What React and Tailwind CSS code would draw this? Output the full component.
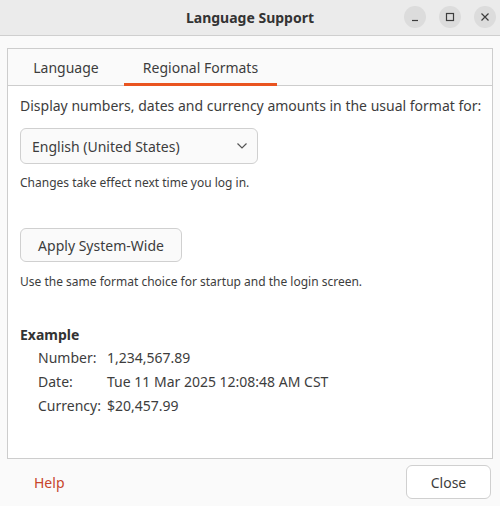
import React, { useState } from 'react';

const font = { fontFamily: '"Noto Sans", "Liberation Sans", sans-serif' };

const TitleButton = ({ children }) => (
  <button className="w-[22px] h-[22px] rounded-full bg-[#dcdcdc] flex items-center justify-center text-[#3d3d3d]">
    {children}
  </button>
);

const App = () => {
  const [tab, setTab] = useState('regional');

  return (
    <div className="w-[500px] h-[506px] bg-[#fafafa] flex flex-col text-[#3d3d3d] whitespace-nowrap" style={font}>
      {/* title bar */}
      <div className="h-[36px] bg-[#ebebeb] border-b border-[#cfcfcf] flex items-center relative shrink-0">
        <div className="flex-1 text-center font-bold text-[14px] text-[#333]">Language Support</div>
        <div className="absolute right-[4px] top-[6px] flex gap-[13px]">
          <TitleButton>
            <svg width="10" height="10" viewBox="0 0 10 10"><path d="M2 8.5h6" stroke="currentColor" strokeWidth="1.2" /></svg>
          </TitleButton>
          <TitleButton>
            <svg width="10" height="10" viewBox="0 0 10 10"><rect x="1.5" y="1.5" width="7" height="7" fill="none" stroke="currentColor" strokeWidth="1.2" /></svg>
          </TitleButton>
          <TitleButton>
            <svg width="10" height="10" viewBox="0 0 10 10"><path d="M1.5 1.5l7 7M8.5 1.5l-7 7" stroke="currentColor" strokeWidth="1.2" /></svg>
          </TitleButton>
        </div>
      </div>

      {/* notebook */}
      <div className="mx-[7px] mt-[12px] h-[411px] border border-[#cdcdcd] flex flex-col bg-white">
        <div className="h-[37px] bg-[#fafafa] border-b border-[#cdcdcd] flex items-end shrink-0">
          <button
            onClick={() => setTab('language')}
            className="h-full w-[116px] text-[14px] flex items-center justify-center relative"
          >
            Language
            {tab === 'language' && <span className="absolute left-0 right-0 bottom-[-1px] h-[3px] bg-[#e95420]" />}
          </button>
          <button
            onClick={() => setTab('regional')}
            className="h-full w-[153px] text-[14px] flex items-center justify-center relative"
          >
            Regional Formats
            {tab === 'regional' && <span className="absolute left-0 right-0 bottom-[-1px] h-[3px] bg-[#e95420]" />}
          </button>
        </div>

        <div className="px-[12px] pt-[10px] flex flex-col">
          <p className="text-[14px] leading-[20px]">Display numbers, dates and currency amounts in the usual format for:</p>

          <div className="mt-[12px] w-[238px] h-[36px] rounded-[6px] border border-[#d0d0d0] bg-[#fafafa] flex items-center justify-between pl-[11px] pr-[9px] text-[14px]">
            <span>English (United States)</span>
            <svg width="12" height="8" viewBox="0 0 12 8">
              <path d="M1.5 1.5l4.5 4.5 4.5-4.5" fill="none" stroke="#555" strokeWidth="1.2" />
            </svg>
          </div>

          <p className="mt-[11px] text-[12px] leading-[16px]">Changes take effect next time you log in.</p>

          <button className="mt-[37px] w-[162px] h-[34px] rounded-[6px] border border-[#d0d0d0] bg-[#fafafa] text-[14px]">
            Apply System-Wide
          </button>

          <p className="mt-[12px] text-[12px] leading-[16px]">Use the same format choice for startup and the login screen.</p>

          <p className="mt-[35px] font-bold text-[14px] leading-[20px] text-[#333]">Example</p>

          <div className="mt-[3px] ml-[18px] grid grid-cols-[69px_1fr] gap-y-[4px] text-[14px] leading-[20px]">
            <span>Number:</span>
            <span>1,234,567.89</span>
            <span>Date:</span>
            <span>Tue 11 Mar 2025 12:08:48 AM CST</span>
            <span>Currency:</span>
            <span>$20,457.99</span>
          </div>
        </div>
      </div>

      {/* footer */}
      <div className="flex items-center justify-between pl-[34px] pr-[9px] mt-[6px]">
        <span className="text-[14px] text-[#c7452b]">Help</span>
        <button className="w-[85px] h-[34px] rounded-[6px] border border-[#d0d0d0] bg-white text-[14px]">Close</button>
      </div>
    </div>
  );
};

export default App;
